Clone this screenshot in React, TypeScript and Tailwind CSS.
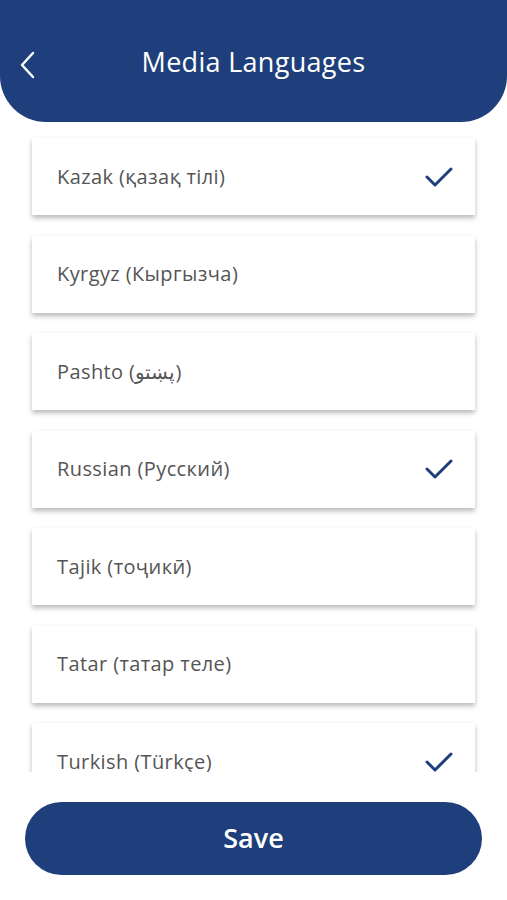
import React from "react";

const items = [
  { label: "Kazak (қазақ тілі)", checked: true },
  { label: "Kyrgyz (Кыргызча)", checked: false },
  { label: "Pashto (پښتو)", checked: false },
  { label: "Russian (Русский)", checked: true },
  { label: "Tajik (тоҷикӣ)", checked: false },
  { label: "Tatar (татар теле)", checked: false },
  { label: "Turkish (Türkçe)", checked: true },
];

function Check() {
  return (
    <svg width="28" height="22" viewBox="0 0 28 22" fill="none">
      <path d="M2 11 L10 19 L26 3" stroke="#1e3f7b" strokeWidth="3" strokeLinecap="round" strokeLinejoin="round" />
    </svg>
  );
}

export default function App() {
  return (
    <div className="w-[507px] h-[900px] bg-white flex flex-col overflow-hidden" style={{ fontFamily: "'Open Sans', 'Noto Sans', sans-serif" }}>
      <div className="h-[122px] shrink-0 bg-[#1e3f7b] rounded-b-[46px] flex items-center relative pt-[2px]">
        <div className="absolute left-[18px] top-[50px]">
          <svg width="20" height="30" viewBox="0 0 20 30" fill="none">
            <path d="M15 3 L4 15 L15 27" stroke="white" strokeWidth="2.5" strokeLinecap="round" strokeLinejoin="round" />
          </svg>
        </div>
        <div className="w-full text-center text-white text-[27px] tracking-[0.3px]">Media Languages</div>
      </div>
      <div className="h-[650px] overflow-hidden px-[32px] pt-[16px] flex flex-col gap-[20.5px]">
        {items.map((it) => (
          <div key={it.label} className="h-[77px] shrink-0 bg-white flex items-center justify-between pl-[25px] pr-[22px] shadow-[0_3px_5px_rgba(0,0,0,0.28)]">
            <span className="text-[20px] tracking-[0.4px] text-[#555555]">{it.label}</span>
            {it.checked && <Check />}
          </div>
        ))}
      </div>
      <div className="px-[25px] pt-[30px]">
        <div className="h-[73px] rounded-full bg-[#1e3f7b] flex items-center justify-center text-white text-[27px] font-semibold">Save</div>
      </div>
    </div>
  );
}
